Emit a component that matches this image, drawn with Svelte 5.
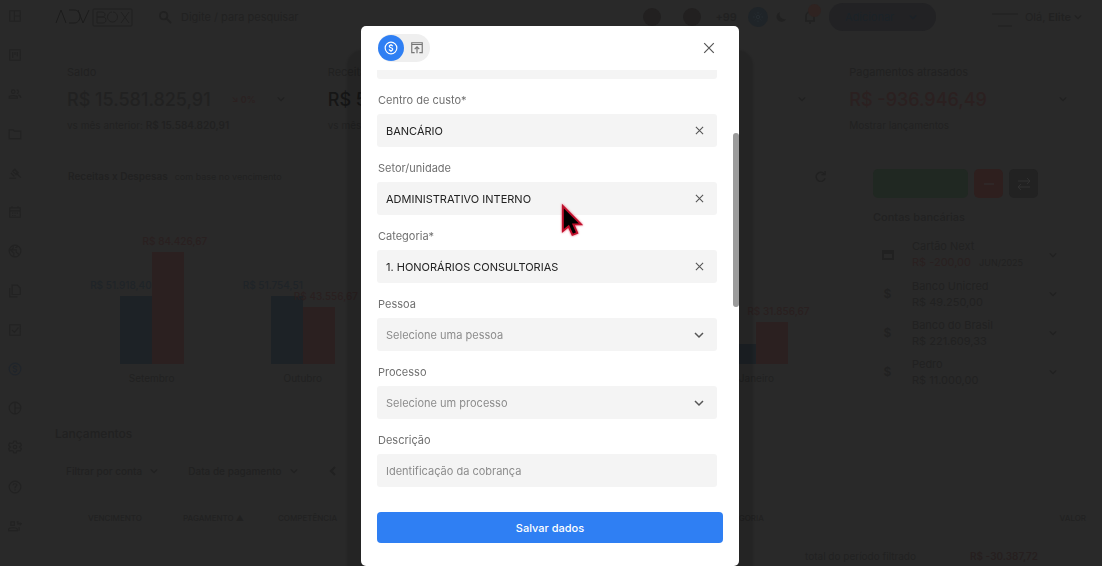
<script lang="ts">
  let pessoa = $state("");
  let processo = $state("");
  let descricao = $state("");
  let search = $state("");

  let picked = $state([
    { id: "centro", label: "Centro de custo*", value: "BANCÁRIO" },
    { id: "setor", label: "Setor/unidade", value: "ADMINISTRATIVO INTERNO" },
    { id: "categoria", label: "Categoria*", value: "1. HONORÁRIOS CONSULTORIAS" },
  ]);

  const menu = [
    { name: "Painel", d: "M3 3h18v18H3zM11 3v18M11 12h10" },
    { name: "Kanban", d: "M3 3h18v18H3zM8 7v10M12 7v5M16 7v7" },
    { name: "Pessoas", d: "M2 19v-2c0-3 14-3 14 0v2zM9 11a3 3 0 1 0 0-6 3 3 0 0 0 0 6M15 5a3 3 0 0 1 0 6M18 14c3 1 4 2 4 5" },
    { name: "Pastas", d: "M2 5h7l2 2h11v13H2z" },
    { name: "Processos", d: "M2 21h12M5 12l6 6M11 5l7 7M8 9l3-3 6 6-3 3zM14 12l8 8" },
    { name: "Agenda", d: "M3 5h18v16H3zM3 10h18M7 2v4M17 2v4M7 14h2M11 14h2M15 14h2M7 18h2M11 18h2" },
    { name: "Site", d: "M12 2a10 10 0 1 0 0 20 10 10 0 0 0 0-20M3 9l7 7v5M9 3v4l-3 3h8v4l5 4M15 3v3h-3" },
    { name: "Documentos", d: "M7 2h9l5 5v11H7zM3 7v15h13" },
    { name: "Tarefas", d: "M3 3h18v18H3zM7 12l4 4 7-8" },
    { name: "Financeiro", d: "M12 2a10 10 0 1 0 0 20 10 10 0 0 0 0-20M15 9c-1-3-6-2-6 0 0 3 6 2 6 5 0 3-6 3-6 0M12 5v2M12 17v2" },
    { name: "Relatórios", d: "M12 2a10 10 0 1 0 0 20 10 10 0 0 0 0-20M12 2v20M12 12h10" },
    { name: "Ajustes", d: "M10 2h4l1 3 3 1 3-1 2 4-3 3 3 3-2 4-3-1-3 1-1 3h-4l-1-3-3-1-3 1-2-4 3-3-3-3 2-4 3 1 3-1zM12 9a3 3 0 1 0 0 6 3 3 0 0 0 0-6" },
    { name: "Ajuda", d: "M12 2a10 10 0 1 0 0 20 10 10 0 0 0 0-20M9 9c0-4 7-3 6 0-1 2-3 2-3 5M12 16v2" },
    { name: "Convidar", d: "M1 20v-2c0-4 15-4 15 0v2zM5 5h6v6H5zM15 5h2v5M18 8h6M21 6v5M19 14v6" },
  ];

  // alturas das barras em pixels
  const months = [
    { name: "Setembro", inc: 68, incText: "R$ 51.918,40", out: 112, outText: "R$ 84.426,67" },
    { name: "Outubro", inc: 68, incText: "R$ 51.754,51", out: 57, outText: "R$ 43.556,67" },
    { name: "", inc: 0, incText: "", out: 0, outText: "" },
    { name: "", inc: 0, incText: "", out: 0, outText: "" },
    { name: "Janeiro", inc: 20, incText: "", out: 42, outText: "R$ 31.856,67" },
  ];

  const accounts = [
    { name: "Cartão Next", value: "R$ -200,00", note: "JUN/2025", card: true },
    { name: "Banco Unicred", value: "R$ 49.250,00" },
    { name: "Banco do Brasil", value: "R$ 221.609,33" },
    { name: "Pedro", value: "R$ 11.000,00" },
  ];
</script>

{#snippet chevron()}
  <svg class="chev" viewBox="0 0 10 10" aria-hidden="true"><path d="M1 3l4 4 4-4" /></svg>
{/snippet}

{#snippet cross()}
  <svg viewBox="0 0 10 10" aria-hidden="true"><path d="M1 1l8 8M9 1l-8 8" /></svg>
{/snippet}

<div class="page">
  <nav class="side" aria-label="Menu">
    {#each menu as m}
      <a href="#{m.name}" aria-label={m.name} class:current={m.name === "Financeiro"}>
        <svg viewBox="0 0 24 24"><path d={m.d} /></svg>
      </a>
    {/each}
  </nav>

  <div class="main">
    <header class="top">
      <a class="logo" href="#inicio" aria-label="Advbox">
        <svg viewBox="0 0 78 19">
          <path d="M1 15L6 2l5 13M14 2h5c8 0 8 13 0 13h-5M23 2l5 13 6-13" />
          <g class="box">
            <rect x="38" y="1" width="39" height="17" rx="1" />
            <path d="M42 4h5c4 0 4 5 0 5h-5zM42 9h6c4 0 4 6 0 6h-6zM57 4a5 5 0 1 0 1 0M66 4l8 11M74 4l-8 11" />
          </g>
        </svg>
      </a>
      <label class="search">
        <svg viewBox="0 0 14 14"><circle cx="5" cy="5" r="4" /><path d="M8 8l5 5" /></svg>
        <input type="search" aria-label="Pesquisar" placeholder="Digite / para pesquisar" bind:value={search} />
      </label>
      <div class="people">
        <span class="avatar"></span>
        <span class="avatar"></span>
        <b>+99</b>
      </div>
      <button class="sun" aria-label="Tema claro">
        <svg viewBox="0 0 12 12"><circle cx="6" cy="6" r="2" /><path d="M6 0v2M6 10v2M0 6h2M10 6h2M2 2l1 1M9 9l1 1M2 10l1-1M9 3l1-1" /></svg>
      </button>
      <button class="moon" aria-label="Tema escuro">
        <svg viewBox="0 0 12 12"><path d="M5 1a5 5 0 1 0 6 7A5 5 0 0 1 5 1z" /></svg>
      </button>
      <button class="bell" aria-label="Avisos">
        <svg viewBox="0 0 12 14"><path d="M1 11h10M2 11V6a4 4 0 0 1 8 0v5M5 13h2" /></svg>
        <span class="badge"></span>
      </button>
      <button class="add">Adicionar {@render chevron()}</button>
      <svg class="client" viewBox="0 0 28 20" aria-hidden="true"><path d="M1 7h26M7 19h14" /></svg>
      <button class="hello">Olá, <b>Elite</b> {@render chevron()}</button>
    </header>

    <section class="cards">
      <div class="card">
        <div class="title">Saldo</div>
        <div class="value"><span>R$ 15.581.825,91</span> <small>↘ 0%</small> {@render chevron()}</div>
        <div class="sub">vs mês anterior: <b>R$ 15.584.820,91</b></div>
      </div>
      <div class="card">
        <div class="title">Receitas</div>
        <div class="value strong"><span>R$ 5</span></div>
        <div class="sub">vs mês</div>
      </div>
      <div class="card">
        <div class="value lone">{@render chevron()}</div>
      </div>
      <div class="card">
        <div class="title">Pagamentos atrasados</div>
        <div class="value late"><span>R$ -936.946,49</span> {@render chevron()}</div>
        <div class="sub">Mostrar lançamentos</div>
      </div>
    </section>

    <div class="middle">
      <section class="chart">
        <div class="chart-head">
          <b>Receitas x Despesas</b>
          <span>com base no vencimento</span>
          <button aria-label="Atualizar">
            <svg viewBox="0 0 12 12"><path d="M10 3a5 5 0 1 0 1 5M11 0v4H7" /></svg>
          </button>
        </div>
        <div class="months">
          {#each months as m}
            <div class="month">
              <div class="pair">
                <div class="bar inc">
                  <span>{m.incText}</span>
                  <div style="height: {m.inc}px"></div>
                </div>
                <div class="bar out">
                  <span>{m.outText}</span>
                  <div style="height: {m.out}px"></div>
                </div>
              </div>
              <div class="name">{m.name}</div>
            </div>
          {/each}
        </div>
      </section>

      <section class="bank">
        <div class="actions">
          <button class="green" aria-label="Receita"></button>
          <button class="red" aria-label="Despesa"><svg viewBox="0 0 14 14"><path d="M2 7h10" /></svg></button>
          <button class="grey" aria-label="Transferência">
            <svg viewBox="0 0 14 14"><path d="M1 4h12M10 1l3 3-3 3M13 10H1M4 7l-3 3 3 3" /></svg>
          </button>
        </div>
        <h2>Contas bancárias</h2>
        {#each accounts as a}
          <div class="account">
            <div class="icon">
              {#if a.card}
                <svg viewBox="0 0 12 10"><path d="M1 1h10v8H1zM1 3h10" /></svg>
              {:else}
                $
              {/if}
            </div>
            <div class="info">
              <div>{a.name}</div>
              <div class:neg={a.card}>{a.value} {#if a.note}<small>{a.note}</small>{/if}</div>
            </div>
            {@render chevron()}
          </div>
        {/each}
      </section>
    </div>

    <section class="entries">
      <h1>Lançamentos</h1>
      <div class="filters">
        <button>Filtrar por conta {@render chevron()}</button>
        <button>Data de pagamento {@render chevron()}</button>
        <button class="prev" aria-label="Anterior">
          <svg viewBox="0 0 10 10"><path d="M7 1L3 5l4 4" /></svg>
        </button>
      </div>
      <table>
        <thead>
          <tr><th>VENCIMENTO</th><th>PAGAMENTO ▲</th><th>COMPETÊNCIA</th><th class="cat">CATEGORIA</th><th class="num">VALOR</th></tr>
        </thead>
      </table>
      <div class="total"><span>total do período filtrado</span> <b>R$ -30.387,72</b></div>
    </section>
  </div>
</div>

<div class="overlay">
  <div class="modal" role="dialog" aria-modal="true" aria-label="Novo lançamento">
    <div class="modal-head">
      <div class="toggle">
        <button class="on" aria-label="Lançamento">
          <svg viewBox="0 0 24 24"><circle cx="12" cy="12" r="10" /><path d="M15 9c-1-3-6-2-6 0 0 3 6 2 6 5 0 3-6 3-6 0M12 5v2M12 17v2" /></svg>
        </button>
        <button aria-label="Importar">
          <svg viewBox="0 0 24 24"><path d="M8 20H3V3h18v17h-5M3 6h18M12 21V11M8 14l4-4 4 4" /></svg>
        </button>
      </div>
      <button class="close" aria-label="Fechar">{@render cross()}</button>
    </div>

    <form class="body" id="lancamento">
      <div class="field"><input aria-label="Conta" /></div>
      {#each picked as p}
        <label for={p.id}>{p.label}</label>
        <div class="field">
          <input id={p.id} bind:value={p.value} />
          <button type="button" class="clear" aria-label="Limpar" onclick={() => (p.value = "")}>{@render cross()}</button>
        </div>
      {/each}
      <label for="pessoa">Pessoa</label>
      <div class="field">
        <select id="pessoa" bind:value={pessoa}><option value="">Selecione uma pessoa</option></select>
        {@render chevron()}
      </div>
      <label for="processo">Processo</label>
      <div class="field">
        <select id="processo" bind:value={processo}><option value="">Selecione um processo</option></select>
        {@render chevron()}
      </div>
      <label for="descricao">Descrição</label>
      <div class="field">
        <input id="descricao" placeholder="Identificação da cobrança" bind:value={descricao} />
      </div>
    </form>

    <button class="save" form="lancamento">Salvar dados</button>
    <div class="thumb"></div>
  </div>
</div>

<svg class="cursor" viewBox="0 0 24 36" aria-hidden="true"><path d="M3 3v26l6-5 4 9 5-2-4-9h8z" /></svg>

<style>
  :global(body) {
    background: #292929;
    overflow: hidden;
  }
  :global(#app) {
    font-family: Inter, "Liberation Sans", sans-serif;
    font-size: 11px;
    color: #212121;
  }
  button, input, select {
    font: inherit;
    color: inherit;
    background: none;
    border: 0;
    padding: 0;
    margin: 0;
    outline: 0;
  }
  svg {
    display: block;
    flex: none;
    fill: none;
    stroke: currentColor;
    stroke-width: 2;
  }
  b {
    font-weight: 600;
  }
  .chev {
    width: 8px;
    height: 8px;
    stroke-width: 1.5;
  }
  .page {
    display: flex;
    height: 100vh;
    overflow: hidden;
  }

  /* menu lateral */
  .side {
    flex: none;
    width: 30px;
    box-sizing: border-box;
    padding: 9px 8px 33px;
    display: flex;
    flex-direction: column;
    justify-content: space-between;
  }
  .side a {
    color: #222222;
  }
  .side a.current {
    color: #20252b;
  }
  .side svg {
    width: 14px;
    height: 14px;
  }
  .main {
    flex: 1;
    min-width: 0;
    padding-left: 25px;
  }

  /* topo */
  .top {
    display: flex;
    align-items: center;
    height: 34px;
    padding-right: 20px;
    font-size: 11px;
  }
  .logo {
    color: #1c1c1c;
  }
  .logo svg {
    width: 78px;
    height: 19px;
    stroke-width: 1;
  }
  .box {
    color: #202020;
  }
  .search {
    flex: 1;
    display: flex;
    align-items: center;
    gap: 9px;
    margin-left: 26px;
  }
  .search svg {
    width: 13px;
    height: 13px;
  }
  .search input {
    flex: 1;
  }
  .search input::placeholder {
    color: #212121;
    opacity: 1;
  }
  .people {
    display: flex;
    align-items: center;
    gap: 22px;
    margin-right: 11px;
  }
  .people b {
    margin-left: -8px;
  }
  .avatar {
    width: 18px;
    height: 18px;
    border-radius: 50%;
    background: #222020;
  }
  .sun {
    width: 20px;
    height: 20px;
    border-radius: 50%;
    padding: 5px;
    background: #1f2428;
    color: #272e34;
    margin-right: 7px;
  }
  .sun svg {
    width: 10px;
    height: 10px;
    stroke-width: 1;
  }
  .moon svg {
    width: 12px;
    height: 12px;
    fill: currentColor;
    stroke: none;
  }
  .bell {
    position: relative;
    margin: 0 13px 0 17px;
  }
  .bell svg {
    width: 12px;
    height: 14px;
    stroke-width: 1.5;
  }
  .badge {
    position: absolute;
    top: -6px;
    right: -5px;
    width: 13px;
    height: 13px;
    border-radius: 50%;
    background: #2f2321;
  }
  .add {
    display: flex;
    align-items: center;
    justify-content: space-between;
    width: 107px;
    height: 28px;
    border-radius: 14px;
    padding: 0 19px 0 16px;
    background: #222224;
    color: #1b2228;
  }
  .client {
    width: 28px;
    height: 20px;
    margin: 0 6px 0 55px;
    stroke-width: 1;
  }
  .hello {
    display: flex;
    align-items: center;
    gap: 3px;
  }

  /* indicadores */
  .cards {
    display: grid;
    grid-template-columns: repeat(4, 1fr);
    padding: 30px 0 0 12px;
    margin-right: -8px;
  }
  .card {
    height: 96px;
  }
  .title {
    font-size: 11px;
    line-height: 16px;
  }
  .value {
    display: flex;
    align-items: center;
    justify-content: space-between;
    height: 38px;
    padding-right: 43px;
    font-size: 18px;
    font-weight: 500;
  }
  .value small {
    font-size: 9px;
    font-weight: 600;
    color: #2b2121;
  }
  .strong {
    color: #161616;
  }
  .late {
    color: #2b2020;
  }
  .lone {
    padding-top: 16px;
    justify-content: flex-end;
  }
  .late .chev {
    color: #212121;
  }
  .sub {
    font-size: 10px;
    line-height: 14px;
  }

  /* receitas x despesas */
  .middle {
    display: flex;
    justify-content: space-between;
    height: 256px;
    padding: 6px 45px 0 13px;
  }
  .chart {
    flex: 1;
    margin-right: 41px;
  }
  .chart-head {
    display: flex;
    align-items: center;
    gap: 7px;
    height: 20px;
    padding-right: 6px;
    font-size: 10px;
  }
  .chart-head span {
    font-size: 9px;
  }
  .chart-head button {
    margin-left: auto;
  }
  .chart-head svg {
    width: 11px;
    height: 11px;
    stroke-width: 1.5;
  }
  .months {
    display: grid;
    grid-template-columns: repeat(5, 1fr);
    padding-left: 8px;
  }
  .pair {
    display: flex;
    justify-content: center;
    align-items: flex-end;
    height: 178px;
  }
  .bar {
    width: 32px;
    display: flex;
    flex-direction: column;
    font-size: 10px;
    font-weight: 500;
    line-height: 22px;
    white-space: nowrap;
  }
  .inc {
    align-items: flex-end;
    color: #1f2428;
  }
  .out span {
    margin-left: -9px;
    color: #292020;
  }
  .bar div {
    width: 32px;
  }
  .inc div {
    background: #1d2226;
  }
  .out div {
    background: #2b2020;
  }
  .name {
    text-align: center;
    line-height: 28px;
    font-size: 10px;
  }

  /* contas */
  .bank {
    flex: none;
    width: 184px;
  }
  .actions {
    display: grid;
    grid-template-columns: 95px 29px 29px;
    gap: 6px;
    height: 29px;
    padding-top: 3px;
  }
  .actions button {
    border-radius: 5px;
    display: grid;
    place-items: center;
    color: #303030;
  }
  .actions svg {
    width: 14px;
    height: 14px;
    stroke-width: 1;
  }
  .actions .green {
    background: #202822;
  }
  .actions .red {
    background: #2e1f1e;
  }
  .actions .grey {
    background: #222222;
  }
  h2 {
    margin: 11px 0 10px;
    font-size: 11px;
    line-height: 16px;
    font-weight: 500;
  }
  .account {
    display: flex;
    align-items: center;
    height: 39px;
    line-height: 16px;
  }
  .icon {
    width: 29px;
    text-align: center;
    margin-right: 10px;
    font-size: 12px;
    font-weight: 600;
  }
  .icon svg {
    width: 12px;
    height: 10px;
    margin: 0 auto;
  }
  .info {
    flex: 1;
  }
  .info small {
    margin-left: 5px;
    font-size: 9px;
    color: #212121;
  }
  .neg {
    color: #2a2020;
  }

  /* tabela */
  h1 {
    margin: 0;
    font-size: 12px;
    line-height: 18px;
    font-weight: 500;
  }
  .entries {
    padding-top: 3px;
  }
  .filters {
    display: flex;
    gap: 30px;
    padding: 20px 0 0 11px;
  }
  .filters button {
    display: flex;
    align-items: center;
    gap: 8px;
    height: 16px;
    font-size: 10px;
    font-weight: 500;
  }
  .prev svg {
    width: 10px;
    height: 10px;
  }
  table {
    width: 100%;
    margin-top: 31px;
    padding-left: 33px;
    border-spacing: 0;
    table-layout: fixed;
  }
  th {
    padding: 0;
    width: 95px;
    height: 16px;
    text-align: left;
    font-size: 8px;
    font-weight: 500;
  }
  th.cat {
    width: auto;
    padding-left: 345px;
  }
  th.num {
    text-align: right;
    padding-right: 16px;
  }
  .total {
    display: flex;
    justify-content: flex-end;
    gap: 54px;
    padding: 22px 64px 0 0;
    font-size: 10px;
    line-height: 16px;
  }
  .total b {
    color: #261f1f;
  }

  /* janela */
  .overlay {
    position: fixed;
    inset: 0;
    display: flex;
    justify-content: center;
    padding: 26px 2px 0 0;
  }
  .modal {
    position: relative;
    box-sizing: border-box;
    width: 378px;
    padding: 8px 16px 23px;
    display: flex;
    flex-direction: column;
    background: #fff;
    border-radius: 5px;
    box-shadow: 0 38px 2px 14px rgba(0, 0, 0, 0.12);
  }
  .modal-head {
    display: flex;
    align-items: center;
    justify-content: space-between;
    height: 36px;
    padding: 0 8px 0 1px;
  }
  .toggle {
    display: flex;
    align-self: flex-start;
    background: #efefef;
    border-radius: 14px;
    height: 28px;
    width: 52px;
    align-items: center;
  }
  .toggle button {
    display: grid;
    place-items: center;
    width: 26px;
    height: 26px;
    border-radius: 50%;
    color: #757575;
  }
  .toggle .on {
    background: #2f7ff3;
    color: #fff;
  }
  .toggle svg {
    width: 14px;
    height: 14px;
  }
  .close {
    color: #555;
    align-self: flex-start;
    padding: 8px 0;
  }
  .close svg {
    width: 12px;
    height: 12px;
    stroke-width: 1;
  }
  .body {
    flex: 1;
    min-height: 0;
    margin-right: 6px;
    overflow: hidden;
    display: flex;
    flex-direction: column;
    justify-content: flex-end;
  }
  .body label {
    flex: none;
    margin: 13px 0 6px 1px;
    line-height: 16px;
    color: #707070;
  }
  .field {
    flex: none;
    display: grid;
    grid-template-columns: 1fr 36px;
    align-items: center;
    height: 33px;
    background: #f4f4f4;
    border-radius: 3px;
    color: #222;
  }
  .field input, .field select {
    grid-area: 1 / 1 / 2 / 3;
    width: 100%;
    height: 33px;
    box-sizing: border-box;
    padding: 0 36px 0 9px;
    appearance: none;
  }
  .field select, .field input::placeholder {
    color: #8c8c8c;
    opacity: 1;
  }
  .clear, .field .chev {
    grid-area: 1 / 2;
    justify-self: center;
    color: #555;
  }
  .field .chev {
    width: 10px;
    height: 10px;
    pointer-events: none;
  }
  .clear svg {
    width: 9px;
    height: 9px;
    stroke-width: 1.2;
  }
  .save {
    flex: none;
    height: 31px;
    margin-top: 25px;
    border-radius: 4px;
    background: #2f7ff3;
    color: #fff;
    font-weight: 500;
  }
  .thumb {
    position: absolute;
    top: 107px;
    right: 0;
    width: 6px;
    height: 174px;
    border-radius: 3px;
    background: #9b9b9b;
  }
  .cursor {
    position: absolute;
    left: 560px;
    top: 203px;
    width: 23px;
    height: 35px;
    fill: #000;
    stroke: #c0102c;
    filter: drop-shadow(0 0 1px #e0506a);
  }
</style>
